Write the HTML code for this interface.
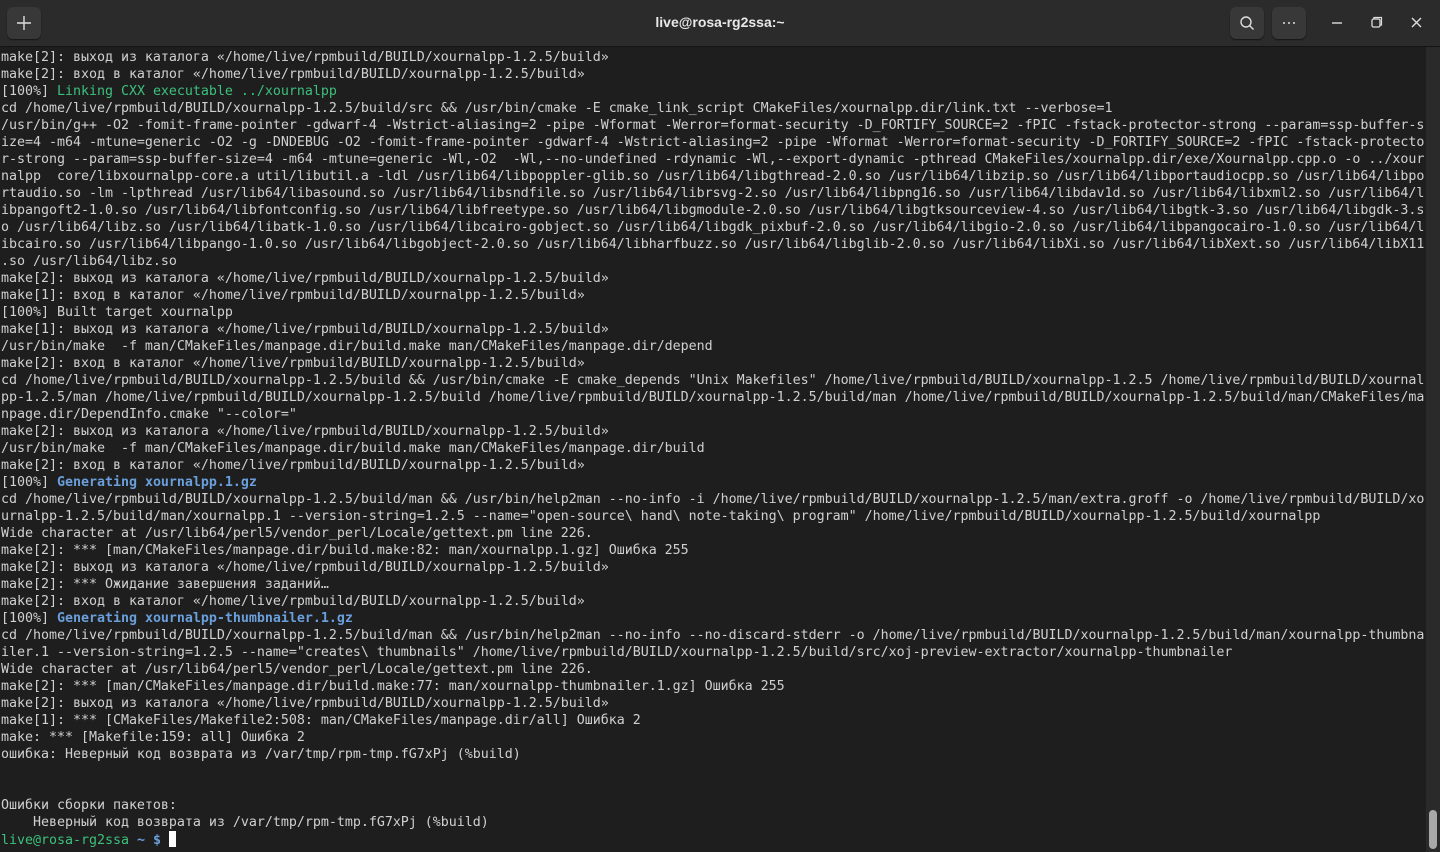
<!DOCTYPE html>
<html><head><meta charset="utf-8"><style>
html,body{margin:0;padding:0;width:1440px;height:852px;overflow:hidden;background:#1e1e1e}
.hdr{position:absolute;left:0;top:0;width:1440px;height:46px;background:#2b2b2b;border-bottom:1px solid #141414}
.btn{position:absolute;top:7px;width:34px;height:32px;border-radius:6px;background:#383838;box-shadow:0 1px 1px #151515}
.title{position:absolute;left:0;width:1440px;top:14px;text-align:center;color:#e8e8e8;font:bold 14px "Liberation Sans",sans-serif}
pre{position:absolute;left:1px;top:49px;margin:0;font:13.33px/17px "DejaVu Sans Mono","Liberation Mono",monospace;letter-spacing:-0.028px;color:#d0d0d0;white-space:pre}
.g{color:#3cc07c}.b{color:#6a9fdb;font-weight:bold}
.track{position:absolute;left:1426px;top:47px;width:14px;height:805px;background:#2a2a2a}
.thumb{position:absolute;left:1429px;top:810px;width:8px;height:39px;border-radius:4px;background:#a8a8a8}
.cur{display:inline-block;width:7px;height:16px;background:#fff;vertical-align:-3px}
</style></head><body>
<div class="hdr">
<div class="btn" style="left:7px"><svg width="34" height="32"><path d="M17 9v14M10 16h14" stroke="#ddd" stroke-width="1.4"/></svg></div>
<div class="title">live@rosa-rg2ssa:~</div>
<div class="btn" style="left:1230px"><svg width="34" height="32"><circle cx="16" cy="15" r="5" fill="none" stroke="#ddd" stroke-width="1.4"/><path d="M19.5 18.5l4 4" stroke="#ddd" stroke-width="1.4"/></svg></div>
<div class="btn" style="left:1272px"><svg width="34" height="32"><circle cx="12" cy="16" r="1" fill="#ddd"/><circle cx="17" cy="16" r="1" fill="#ddd"/><circle cx="22" cy="16" r="1" fill="#ddd"/></svg></div>
<svg style="position:absolute;left:1320px;top:10px" width="110" height="26"><path d="M12 13h10" stroke="#ddd" stroke-width="1.4"/><rect x="52" y="9" width="8" height="8" rx="1.5" fill="none" stroke="#ddd" stroke-width="1.3"/><path d="M54 9v-1.5h7.5v7.5h-1.5" fill="none" stroke="#ddd" stroke-width="1.2"/><path d="M92 8l9 9M101 8l-9 9" stroke="#ddd" stroke-width="1.4"/></svg>
</div>
<pre>make[2]: выход из каталога «/home/live/rpmbuild/BUILD/xournalpp-1.2.5/build»
make[2]: вход в каталог «/home/live/rpmbuild/BUILD/xournalpp-1.2.5/build»
[100%] <span class="g">Linking CXX executable ../xournalpp</span>
cd /home/live/rpmbuild/BUILD/xournalpp-1.2.5/build/src &amp;&amp; /usr/bin/cmake -E cmake_link_script CMakeFiles/xournalpp.dir/link.txt --verbose=1
/usr/bin/g++ -O2 -fomit-frame-pointer -gdwarf-4 -Wstrict-aliasing=2 -pipe -Wformat -Werror=format-security -D_FORTIFY_SOURCE=2 -fPIC -fstack-protector-strong --param=ssp-buffer-s
ize=4 -m64 -mtune=generic -O2 -g -DNDEBUG -O2 -fomit-frame-pointer -gdwarf-4 -Wstrict-aliasing=2 -pipe -Wformat -Werror=format-security -D_FORTIFY_SOURCE=2 -fPIC -fstack-protecto
r-strong --param=ssp-buffer-size=4 -m64 -mtune=generic -Wl,-O2  -Wl,--no-undefined -rdynamic -Wl,--export-dynamic -pthread CMakeFiles/xournalpp.dir/exe/Xournalpp.cpp.o -o ../xour
nalpp  core/libxournalpp-core.a util/libutil.a -ldl /usr/lib64/libpoppler-glib.so /usr/lib64/libgthread-2.0.so /usr/lib64/libzip.so /usr/lib64/libportaudiocpp.so /usr/lib64/libpo
rtaudio.so -lm -lpthread /usr/lib64/libasound.so /usr/lib64/libsndfile.so /usr/lib64/librsvg-2.so /usr/lib64/libpng16.so /usr/lib64/libdav1d.so /usr/lib64/libxml2.so /usr/lib64/l
ibpangoft2-1.0.so /usr/lib64/libfontconfig.so /usr/lib64/libfreetype.so /usr/lib64/libgmodule-2.0.so /usr/lib64/libgtksourceview-4.so /usr/lib64/libgtk-3.so /usr/lib64/libgdk-3.s
o /usr/lib64/libz.so /usr/lib64/libatk-1.0.so /usr/lib64/libcairo-gobject.so /usr/lib64/libgdk_pixbuf-2.0.so /usr/lib64/libgio-2.0.so /usr/lib64/libpangocairo-1.0.so /usr/lib64/l
ibcairo.so /usr/lib64/libpango-1.0.so /usr/lib64/libgobject-2.0.so /usr/lib64/libharfbuzz.so /usr/lib64/libglib-2.0.so /usr/lib64/libXi.so /usr/lib64/libXext.so /usr/lib64/libX11
.so /usr/lib64/libz.so
make[2]: выход из каталога «/home/live/rpmbuild/BUILD/xournalpp-1.2.5/build»
make[1]: вход в каталог «/home/live/rpmbuild/BUILD/xournalpp-1.2.5/build»
[100%] Built target xournalpp
make[1]: выход из каталога «/home/live/rpmbuild/BUILD/xournalpp-1.2.5/build»
/usr/bin/make  -f man/CMakeFiles/manpage.dir/build.make man/CMakeFiles/manpage.dir/depend
make[2]: вход в каталог «/home/live/rpmbuild/BUILD/xournalpp-1.2.5/build»
cd /home/live/rpmbuild/BUILD/xournalpp-1.2.5/build &amp;&amp; /usr/bin/cmake -E cmake_depends "Unix Makefiles" /home/live/rpmbuild/BUILD/xournalpp-1.2.5 /home/live/rpmbuild/BUILD/xournal
pp-1.2.5/man /home/live/rpmbuild/BUILD/xournalpp-1.2.5/build /home/live/rpmbuild/BUILD/xournalpp-1.2.5/build/man /home/live/rpmbuild/BUILD/xournalpp-1.2.5/build/man/CMakeFiles/ma
npage.dir/DependInfo.cmake "--color="
make[2]: выход из каталога «/home/live/rpmbuild/BUILD/xournalpp-1.2.5/build»
/usr/bin/make  -f man/CMakeFiles/manpage.dir/build.make man/CMakeFiles/manpage.dir/build
make[2]: вход в каталог «/home/live/rpmbuild/BUILD/xournalpp-1.2.5/build»
[100%] <span class="b">Generating xournalpp.1.gz</span>
cd /home/live/rpmbuild/BUILD/xournalpp-1.2.5/build/man &amp;&amp; /usr/bin/help2man --no-info -i /home/live/rpmbuild/BUILD/xournalpp-1.2.5/man/extra.groff -o /home/live/rpmbuild/BUILD/xo
urnalpp-1.2.5/build/man/xournalpp.1 --version-string=1.2.5 --name="open-source\ hand\ note-taking\ program" /home/live/rpmbuild/BUILD/xournalpp-1.2.5/build/xournalpp
Wide character at /usr/lib64/perl5/vendor_perl/Locale/gettext.pm line 226.
make[2]: *** [man/CMakeFiles/manpage.dir/build.make:82: man/xournalpp.1.gz] Ошибка 255
make[2]: выход из каталога «/home/live/rpmbuild/BUILD/xournalpp-1.2.5/build»
make[2]: *** Ожидание завершения заданий…
make[2]: вход в каталог «/home/live/rpmbuild/BUILD/xournalpp-1.2.5/build»
[100%] <span class="b">Generating xournalpp-thumbnailer.1.gz</span>
cd /home/live/rpmbuild/BUILD/xournalpp-1.2.5/build/man &amp;&amp; /usr/bin/help2man --no-info --no-discard-stderr -o /home/live/rpmbuild/BUILD/xournalpp-1.2.5/build/man/xournalpp-thumbna
iler.1 --version-string=1.2.5 --name="creates\ thumbnails" /home/live/rpmbuild/BUILD/xournalpp-1.2.5/build/src/xoj-preview-extractor/xournalpp-thumbnailer
Wide character at /usr/lib64/perl5/vendor_perl/Locale/gettext.pm line 226.
make[2]: *** [man/CMakeFiles/manpage.dir/build.make:77: man/xournalpp-thumbnailer.1.gz] Ошибка 255
make[2]: выход из каталога «/home/live/rpmbuild/BUILD/xournalpp-1.2.5/build»
make[1]: *** [CMakeFiles/Makefile2:508: man/CMakeFiles/manpage.dir/all] Ошибка 2
make: *** [Makefile:159: all] Ошибка 2
ошибка: Неверный код возврата из /var/tmp/rpm-tmp.fG7xPj (%build)


Ошибки сборки пакетов:
    Неверный код возврата из /var/tmp/rpm-tmp.fG7xPj (%build)
<span class="g">live@rosa-rg2ssa</span> <span class="b">~ $</span> <span class="cur"></span></pre>
<div class="track"></div><div class="thumb"></div>
</body></html>
